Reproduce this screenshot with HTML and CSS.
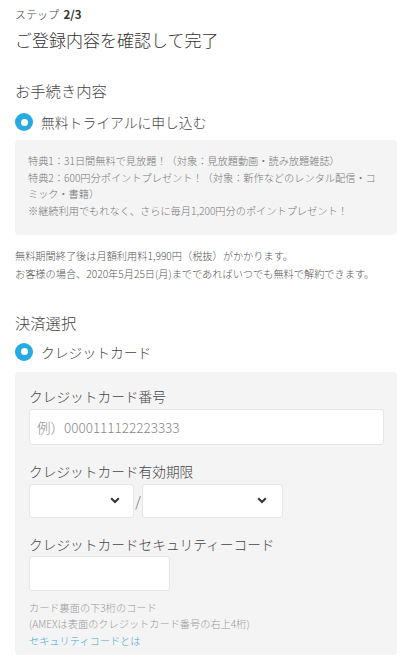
FILE: index.html
```html
<!DOCTYPE html>
<html>

<head>
    <title>ご登録内容を確認して完了</title>
    <link rel="stylesheet" href="styles.css">
</head>

<body>
    <div class="page">
        <div class="step">ステップ <b>2/3</b></div>
        <h1>ご登録内容を確認して完了</h1>

        <h2 class="section-title">お手続き内容</h2>
        <div class="radio-row">
            <span class="radio"></span>
            <span class="radio-label">無料トライアルに申し込む</span>
        </div>
        <div class="benefit-box">
            <p>特典1：31日間無料で見放題！（対象：見放題動画・読み放題雑誌）</p>
            <p>特典2：600円分ポイントプレゼント！（対象：新作などのレンタル配信・コミック・書籍）</p>
            <p>※継続利用でもれなく、さらに毎月1,200円分のポイントプレゼント！</p>
        </div>
        <p class="notice">無料期間終了後は月額利用料1,990円（税抜）がかかります。<br>お客様の場合、2020年5月25日(月)までであればいつでも無料で解約できます。</p>

        <h2 class="section-title pay-title">決済選択</h2>
        <div class="radio-row radio-pay">
            <span class="radio"></span>
            <span class="radio-label">クレジットカード</span>
        </div>
        <div class="card-box">
            <div class="field-label">クレジットカード番号</div>
            <input class="text-input card-number" type="text" placeholder="例）0000111122223333">

            <div class="field-label label-gap">クレジットカード有効期限</div>
            <div class="expiry">
                <div class="select select-month">
                    <svg width="10" height="7" viewBox="0 0 10 7"><path d="M1.2 1.3 L5 5 L8.8 1.3" fill="none" stroke="#333" stroke-width="2"/></svg>
                </div>
                <span class="slash">/</span>
                <div class="select select-year">
                    <svg width="10" height="7" viewBox="0 0 10 7"><path d="M1.2 1.3 L5 5 L8.8 1.3" fill="none" stroke="#333" stroke-width="2"/></svg>
                </div>
            </div>

            <div class="field-label label-gap">クレジットカードセキュリティーコード</div>
            <input class="text-input cvc" type="text">

            <div class="hint">
                カード裏面の下3桁のコード<br>
                (AMEXは表面のクレジットカード番号の右上4桁)<br>
                <a href="#">セキュリティコードとは</a>
            </div>
        </div>
    </div>
</body>

</html>
```

FILE: styles.css
```css
body {
    margin: 0;
    font-family: "Noto Sans CJK JP", "Noto Sans", sans-serif;
    font-weight: 300;
    background-color: #fff;
    color: #333;
}

.page {
    padding: 6px 7px 0 15px;
}

.step {
    font-size: 11px;
    line-height: 16px;
    color: #444;
}

.step b {
    margin-left: 2px;
    font-size: 11.5px;
    font-weight: bold;
    color: #333;
}

h1 {
    margin: 5px 0 0;
    font-size: 17px;
    font-weight: 300;
    line-height: 26px;
}

.section-title {
    margin: 26px 0 0;
    font-size: 15.3px;
    font-weight: 300;
    line-height: 22px;
    color: #444;
}

.pay-title {
    margin-top: 28px;
}

.radio-row {
    display: flex;
    align-items: center;
    height: 20px;
    margin-top: 11px;
}

.radio-pay {
    margin-top: 9px;
}

.radio {
    width: 18px;
    height: 18px;
    border-radius: 50%;
    background-color: #27a9e3;
    display: flex;
    align-items: center;
    justify-content: center;
    margin-right: 8px;
}

.radio::after {
    content: "";
    width: 7px;
    height: 7px;
    border-radius: 50%;
    background-color: #fff;
}

.radio-label {
    font-size: 13.8px;
    color: #444;
}

.benefit-box {
    margin-top: 8px;
    padding: 13px 13px 15px;
    background-color: #f4f4f4;
    border-radius: 4px;
}

.benefit-box p {
    margin: 0;
    font-size: 10.2px;
    line-height: 16.7px;
    color: #777;
}

.notice {
    margin: 12px 0 0;
    font-size: 10.2px;
    line-height: 18px;
    color: #555;
}

.card-box {
    margin-top: 10px;
    padding: 14px 13px 6px 14px;
    background-color: #f4f4f4;
    border-radius: 4px;
}

.field-label {
    font-size: 13.7px;
    line-height: 20px;
    color: #444;
}

.label-gap {
    margin-top: 16px;
}

.text-input {
    display: block;
    box-sizing: border-box;
    margin-top: 3px;
    padding: 0 7px;
    border: 1px solid #e6e6e6;
    border-radius: 3px;
    background-color: #fff;
    font-family: inherit;
    font-weight: 300;
    font-size: 13.5px;
    color: #333;
}

.text-input::placeholder {
    color: #888;
}

.card-number {
    width: 100%;
    height: 36px;
}

.cvc {
    width: 141px;
    height: 35px;
    margin-top: 2px;
}

.expiry {
    display: flex;
    align-items: center;
    margin-top: 3px;
}

.select {
    box-sizing: border-box;
    height: 34px;
    border: 1px solid #e6e6e6;
    border-radius: 3px;
    background-color: #fff;
    display: flex;
    align-items: center;
    justify-content: flex-end;
}

.select-month {
    width: 105px;
    padding-right: 13px;
}

.select-year {
    width: 141px;
    padding-right: 15px;
}

.slash {
    width: 8px;
    text-align: center;
    font-size: 14px;
    color: #666;
}

.hint {
    margin-top: 9px;
    font-size: 10.2px;
    line-height: 16.5px;
    color: #999;
}

.hint a {
    color: #3ea9d6;
    text-decoration: none;
}
```
